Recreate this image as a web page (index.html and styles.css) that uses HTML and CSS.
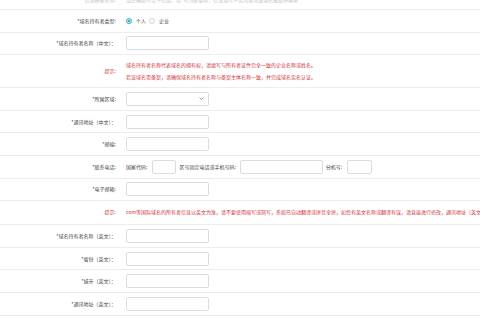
FILE: index.html
```html
<!DOCTYPE html>
<html lang="zh-CN">
<head>
<meta charset="utf-8">
<title>域名持有者信息</title>
<link rel="stylesheet" href="styles.css">
</head>
<body>
<div class="form">
  <div class="row row-top">
    <div class="label muted">*信息模板名称:</div>
    <div class="field muted">请正确填写以下信息，带*号为必填项，信息填写不实可能导致域名被暂停解析</div>
  </div>
  <div class="row">
    <div class="label">*域名持有者类型:</div>
    <div class="field">
      <span class="opt"><span class="radio on"></span><span>个人</span></span>
      <span class="opt"><span class="radio"></span><span>企业</span></span>
    </div>
  </div>
  <div class="row">
    <div class="label">*域名持有者名称（中文）：</div>
    <div class="field"><input class="input" type="text"></div>
  </div>
  <div class="row row-tip2">
    <div class="label tip">提示:</div>
    <div class="field tip tip-text">域名持有者名称代表域名的拥有权，请填写与所有者证件完全一致的企业名称或姓名。<br>若该域名需备案，请确保域名持有者名称与备案主体名称一致，并完成域名实名认证。</div>
  </div>
  <div class="row">
    <div class="label">*所属区域:</div>
    <div class="field">
      <div class="input select"><svg class="chev" width="5" height="3" viewBox="0 0 5 3"><path d="M0.5 0.5 L2.5 2.5 L4.5 0.5" fill="none" stroke="#888" stroke-width="0.8"/></svg></div>
    </div>
  </div>
  <div class="row">
    <div class="label">*通讯地址（中文）：</div>
    <div class="field"><input class="input" type="text"></div>
  </div>
  <div class="row">
    <div class="label">*邮编:</div>
    <div class="field"><input class="input" type="text"></div>
  </div>
  <div class="row">
    <div class="label">*联系电话:</div>
    <div class="field phone">
      <span class="ph-t1">国家代码:</span>
      <input class="input small" type="text">
      <span class="ph-t2">区号固定电话或手机号码:</span>
      <input class="input" type="text">
      <span class="ph-t3">分机号:</span>
      <input class="input ext" type="text">
    </div>
  </div>
  <div class="row">
    <div class="label">*电子邮箱:</div>
    <div class="field"><input class="input" type="text"></div>
  </div>
  <div class="row row-tip1">
    <div class="label tip">提示:</div>
    <div class="field tip tip-text">com等国际域名的所有者信息以英文为准，请不要使用缩写或简写，系统已自动翻译或拼音全拼，如您有英文名称或翻译有误，请直接进行修改，通讯地址（英文）请勿包含中文字符。</div>
  </div>
  <div class="row">
    <div class="label">*域名持有者名称（英文）：</div>
    <div class="field"><input class="input" type="text"></div>
  </div>
  <div class="row">
    <div class="label">*省份（英文）：</div>
    <div class="field"><input class="input" type="text"></div>
  </div>
  <div class="row">
    <div class="label">*城市（英文）：</div>
    <div class="field"><input class="input" type="text"></div>
  </div>
  <div class="row">
    <div class="label">*通讯地址（英文）：</div>
    <div class="field"><input class="input" type="text"></div>
  </div>
</div>
</body>
</html>
```
FILE: styles.css
```css
html, body {
  margin: 0;
  padding: 0;
  background: #fff;
  overflow: hidden;
}
body {
  font-family: "Noto Sans CJK SC", "Noto Sans", sans-serif;
  font-size: 5px;
  line-height: 6px;
  color: #444;
}
.form {
  display: flex;
  flex-direction: column;
  width: 480px;
}
.row {
  display: grid;
  grid-template-columns: 116px 1fr;
  column-gap: 10px;
  align-items: center;
  height: 22.6px;
  box-sizing: border-box;
  border-bottom: 1px solid #ededed;
}
.row-top {
  height: 10px;
  align-content: end;
  align-items: end;
  padding-bottom: 6px;
}
.row-tip2 {
  height: 33px;
}
.row-tip1 {
  height: 24px;
  padding-bottom: 2px;
}
.label {
  text-align: right;
  white-space: nowrap;
}
.muted {
  color: #c4c4c4;
}
.field {
  min-width: 0;
  overflow: hidden;
  display: flex;
  align-items: center;
  white-space: nowrap;
}
.tip {
  color: #d0343a;
}
.tip-text {
  display: block;
  line-height: 12px;
}
.opt {
  display: flex;
  align-items: center;
  gap: 4px;
  margin-right: 3px;
}
.radio {
  width: 6px;
  height: 6px;
  box-sizing: border-box;
  border-radius: 50%;
  border: 1px solid #d4d4d4;
  background: #fff;
}
.radio.on {
  border-color: #38b2c8;
  background: radial-gradient(circle, #38b2c8 0 1.4px, #d9f1f5 1.6px);
}
.input {
  width: 83px;
  height: 14px;
  box-sizing: border-box;
  border: 1px solid #dcdcdc;
  border-radius: 2px;
  margin: 0;
  padding: 0;
  background: #fff;
  display: block;
  font-size: 5px;
}
.select {
  display: flex;
  align-items: center;
  justify-content: flex-end;
  padding-right: 4px;
}
.chev {
  display: block;
}
.phone {
  gap: 0;
}
.ph-t1 {
  margin-right: 5px;
}
.input.small {
  width: 24px;
  margin-right: 3px;
}
.ph-t2 {
  margin-right: 4px;
}
.ph-t3 {
  margin-left: 3px;
  margin-right: 5px;
}
.input.ext {
  width: 25px;
}
```
